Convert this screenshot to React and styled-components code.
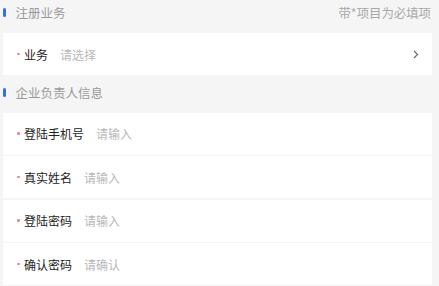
import React from "react";
import styled, { createGlobalStyle } from "styled-components";

const Global = createGlobalStyle`
  html, body { margin: 0; padding: 0; background: #f5f5f5; }
  body { font-family: "Noto Sans CJK SC", "Noto Sans", sans-serif; }
`;

const Page = styled.div`
  width: 439px;
  height: 286px;
  overflow: hidden;
  background: #f5f5f5;
  padding: 0 7px 0 3px;
  box-sizing: border-box;
`;

const SectionHeader = styled.div`
  display: flex;
  align-items: center;
  justify-content: space-between;
  height: ${(p) => (p.$first ? "25px" : "37.7px")};
  margin-bottom: ${(p) => (p.$first ? "8px" : "0")};
  box-sizing: border-box;
  ${(p) => (p.$first ? "" : "padding-bottom: 2px;")}
`;

const Title = styled.div`
  display: flex;
  align-items: center;
  gap: 10px;
  font-size: 12.5px;
  color: #9a9a9a;
`;

const Bar = styled.span`
  width: 2.5px;
  height: 9px;
  border-radius: 1.5px;
  background: #2f6fe8;
`;

const Hint = styled.div`
  font-size: 12.4px;
  color: #a8a8a8;
  margin-right: 1px;
`;

const Rows = styled.div`
  display: flex;
  flex-direction: column;
  gap: 1.5px;
`;

const Row = styled.div`
  display: flex;
  align-items: center;
  height: 42px;
  background: #fff;
  padding: 0 13px 0 14px;
  box-sizing: border-box;
`;

const Dot = styled.span`
  width: 2.5px;
  height: 2.5px;
  border-radius: 50%;
  background: #f07f95;
  margin-right: 4.5px;
  flex: none;
`;

const Label = styled.span`
  font-size: 12px;
  color: #222;
  margin-right: 12px;
`;

const Placeholder = styled.span`
  font-size: 12px;
  color: #b8b8b8;
  flex: 1;
`;

const Chevron = () => (
  <svg width="6" height="9" viewBox="0 0 6 9">
    <path d="M1 1 L4.6 4.5 L1 8" fill="none" stroke="#666" strokeWidth="1.1" />
  </svg>
);

const fields = [
  ["登陆手机号", "请输入"],
  ["真实姓名", "请输入"],
  ["登陆密码", "请输入"],
  ["确认密码", "请确认"],
];

export default function App() {
  return (
    <Page>
      <Global />
      <SectionHeader $first>
        <Title>
          <Bar />
          注册业务
        </Title>
        <Hint>带*项目为必填项</Hint>
      </SectionHeader>
      <Rows>
        <Row>
          <Dot />
          <Label>业务</Label>
          <Placeholder>请选择</Placeholder>
          <Chevron />
        </Row>
      </Rows>
      <SectionHeader>
        <Title>
          <Bar />
          企业负责人信息
        </Title>
      </SectionHeader>
      <Rows>
        {fields.map(([l, p]) => (
          <Row key={l}>
            <Dot />
            <Label>{l}</Label>
            <Placeholder>{p}</Placeholder>
          </Row>
        ))}
      </Rows>
    </Page>
  );
}
